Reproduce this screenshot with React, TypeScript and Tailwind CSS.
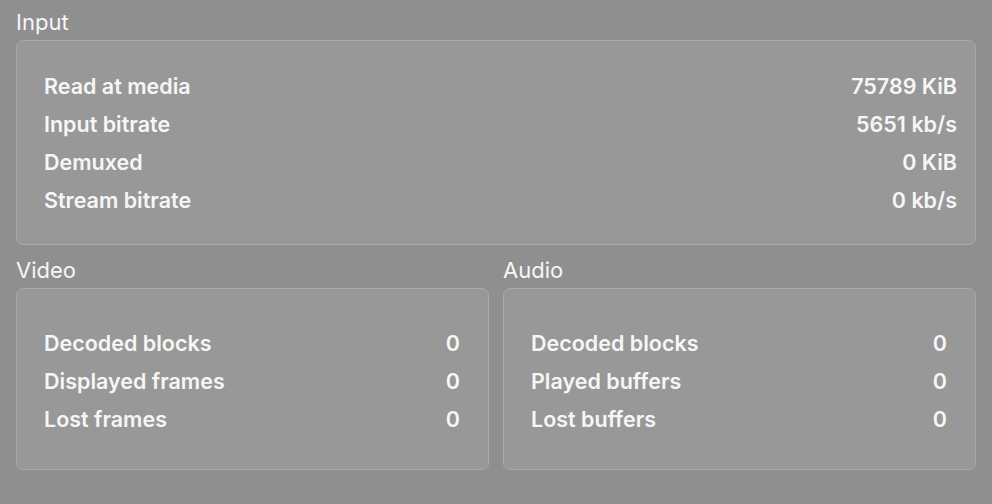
import React from "react";

const Row = ({ label, value }: { label: string; value: string }) => (
  <div className="flex items-center justify-between h-[38px] leading-[38px]">
    <span>{label}</span>
    <span>{value}</span>
  </div>
);

export default function App() {
  return (
    <div
      className="w-[992px] h-[504px] bg-[#8f8f8f] px-4 pt-[10px] text-[#f6f6f6] overflow-hidden"
      style={{ fontFamily: "Inter, 'Noto Sans', sans-serif" }}
    >
      <div className="text-[22px] leading-[24px] font-normal">Input</div>
      <div className="mt-[6px] rounded-[7px] border border-[#a9a9a9] bg-[#989898] pl-[27px] pr-[18px] pt-[26px] pb-[25px] text-[21.5px] font-semibold">
        <Row label="Read at media" value="75789 KiB" />
        <Row label="Input bitrate" value="5651 kb/s" />
        <Row label="Demuxed" value="0 KiB" />
        <Row label="Stream bitrate" value="0 kb/s" />
      </div>
      <div className="mt-[13px] grid grid-cols-2 gap-x-[14px]">
        <div>
          <div className="text-[22px] leading-[24px] font-normal">Video</div>
          <div className="mt-[6px] rounded-[7px] border border-[#a9a9a9] bg-[#989898] pl-[27px] pr-[28px] pt-[35px] pb-[31px] text-[21.5px] font-semibold">
            <Row label="Decoded blocks" value="0" />
            <Row label="Displayed frames" value="0" />
            <Row label="Lost frames" value="0" />
          </div>
        </div>
        <div>
          <div className="text-[22px] leading-[24px] font-normal">Audio</div>
          <div className="mt-[6px] rounded-[7px] border border-[#a9a9a9] bg-[#989898] pl-[27px] pr-[28px] pt-[35px] pb-[31px] text-[21.5px] font-semibold">
            <Row label="Decoded blocks" value="0" />
            <Row label="Played buffers" value="0" />
            <Row label="Lost buffers" value="0" />
          </div>
        </div>
      </div>
    </div>
  );
}
